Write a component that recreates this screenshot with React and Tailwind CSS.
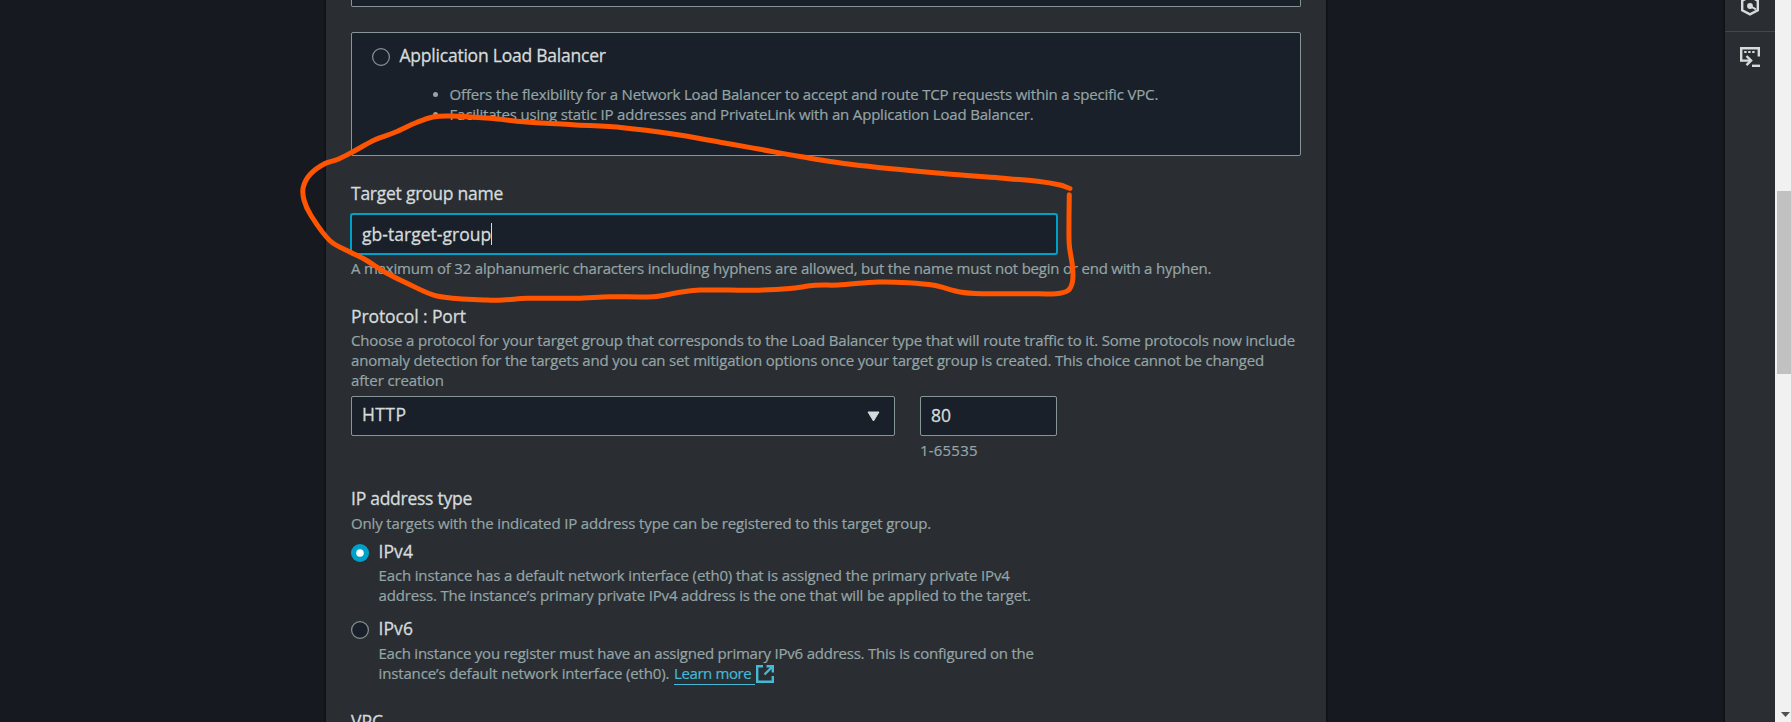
const MARK = [
  [1070, 188.5], [1060, 185], [1037.5, 181.3], [1000, 178], [945, 173.8], [852, 164.5], [800, 156.5], [760, 149.3], [723, 142.7], [673, 134],
  [623, 127.7], [573, 124.7], [523, 121.7], [490, 118.3], [450, 116], [433, 117], [417, 122.3], [395, 132.3],
  [375, 139.7], [353, 151.7], [338, 159.3], [325, 163.5], [310.5, 174], [303.3, 187], [304, 200], [310.7, 215],
  [330, 240.7], [350, 252], [365, 259.5], [387, 273.3], [407, 283.3], [438, 296.3], [487, 300], [503, 300],
  [527, 298.3], [577, 298.3], [610, 296.7], [653, 296.7], [680, 292.3], [700, 290], [753, 290.3], [790, 288.5],
  [815, 285.3], [838, 285], [878, 282], [908, 282.7], [934, 285.3], [960, 292], [982, 293.7], [1030, 293.7], [1056, 293.7],
  [1068, 290.5], [1072.5, 281.5], [1072.5, 266.7], [1069.3, 245], [1069, 220], [1069.3, 194.7],
];

function smooth(pts) {
  let d = `M${pts[0][0]} ${pts[0][1]}`;
  for (let i = 0; i < pts.length - 1; i++) {
    const a = pts[Math.max(0, i - 1)];
    const b = pts[i];
    const c = pts[i + 1];
    const e = pts[Math.min(pts.length - 1, i + 2)];
    const len = Math.hypot(c[0] - b[0], c[1] - b[1]);
    const t1 = len / (Math.hypot(c[0] - a[0], c[1] - a[1]) * 3);
    const t2 = len / (Math.hypot(e[0] - b[0], e[1] - b[1]) * 3);
    d += ` C${b[0] + (c[0] - a[0]) * t1} ${b[1] + (c[1] - a[1]) * t1} ${c[0] - (e[0] - b[0]) * t2} ${c[1] - (e[1] - b[1]) * t2} ${c[0]} ${c[1]}`;
  }
  return d;
}

function Label({ className = '', children }) {
  return <div className={`h-[22px] whitespace-nowrap text-[17.5px] leading-[22px] text-[#d5dbdb] [-webkit-text-stroke:0.3px_currentColor] ${className}`}>{children}</div>;
}

function Hint({ className = '', children }) {
  return <div className={`h-5 whitespace-nowrap text-[15px] leading-5 text-[#95a5a6] [-webkit-text-stroke:0.2px_currentColor] ${className}`}>{children}</div>;
}

function Radio({ checked }) {
  return (
    <svg className="size-[18px] shrink-0" viewBox="0 0 18 18">
      {checked ? (
        <>
          <circle cx="9" cy="9" r="9" fill="#00a1c9" />
          <circle cx="9" cy="9" r="3.8" fill="#fff" />
        </>
      ) : (
        <circle cx="9" cy="9" r="8.4" fill="#1a2029" stroke="#879596" strokeWidth="1.2" />
      )}
    </svg>
  );
}

function Form() {
  return (
    <main className="flex h-[722px] w-[1000px] flex-col overflow-hidden bg-[#2a2e33] px-[25px] shadow-[0_0_2px_1px_rgba(0,0,0,0.45)]">
      <div className="h-[7px] shrink-0 rounded-b-[2px] border border-t-0 border-[#879596] bg-[#1a2029]" />

      <section className="mt-[25px] h-[124px] shrink-0 rounded-[2px] border border-[#879596] bg-[#1a2029] pt-[11px] pl-5">
        <div className="flex gap-[9.5px]">
          <div className="pt-1">
            <Radio />
          </div>
          <Label className="tracking-[-0.22px]">Application Load Balancer</Label>
        </div>
        <ul className="mt-[18px] pl-[61px]">
          <li className="flex items-center gap-[11.5px]">
            <span className="size-[5px] rounded-full bg-[#95a5a6]" />
            <Hint className="tracking-[-0.16px]">
              Offers the flexibility for a Network Load Balancer to accept and route TCP requests within a specific VPC.
            </Hint>
          </li>
          <li className="flex items-center gap-[11.5px]">
            <span className="size-[5px] rounded-full bg-[#95a5a6]" />
            <Hint className="tracking-[-0.183px]">
              Facilitates using static IP addresses and PrivateLink with an Application Load Balancer.
            </Hint>
          </li>
        </ul>
      </section>

      <section className="mt-[26px]">
        <Label className="tracking-[-0.25px]">Target group name</Label>
        <div className="mt-[9px] -ml-px flex h-[42px] w-[708px] items-center rounded-[3px] border-2 border-[#00a1c9] bg-[#1a2029] pl-[10px]">
          <Label className="-mt-px tracking-[0.03px]">gb-target-group</Label>
          <span className="h-[22px] w-px bg-[#d5dbdb]" />
        </div>
        <Hint className="mt-[3px] tracking-[-0.208px]">
          A maximum of 32 alphanumeric characters including hyphens are allowed, but the name must not begin or end with a hyphen.
        </Hint>
      </section>

      <section className="mt-[27px]">
        <Label className="tracking-[-0.096px]">Protocol : Port</Label>
        <Hint className="mt-[3px] tracking-[-0.166px]">
          Choose a protocol for your target group that corresponds to the Load Balancer type that will route traffic to it. Some protocols now include
        </Hint>
        <Hint className="tracking-[-0.181px]">
          anomaly detection for the targets and you can set mitigation options once your target group is created. This choice cannot be changed
        </Hint>
        <Hint className="tracking-[-0.13px]">after creation</Hint>
        <div className="mt-[6px] flex gap-[25px]">
          <div className="flex h-10 w-[544px] items-start justify-between rounded-[2px] border border-[#879596] bg-[#1a2029] pt-[6px] pr-[14px] pl-[10px]">
            <Label className="tracking-[0.4px]">HTTP</Label>
            <svg className="mt-2 h-[11px] w-[13px]" viewBox="0 0 13 11">
              <path d="M1 1h11L6.5 10z" fill="#d5dbdb" stroke="#d5dbdb" strokeWidth="1" strokeLinejoin="round" />
            </svg>
          </div>
          <div className="w-[137px]">
            <div className="h-10 rounded-[2px] border border-[#879596] bg-[#1a2029] pt-[7px] pl-[10px]">
              <Label>80</Label>
            </div>
            <Hint className="mt-1 tracking-[0.2px]">1-65535</Hint>
          </div>
        </div>
      </section>

      <section className="mt-[27px]">
        <Label className="tracking-[-0.256px]">IP address type</Label>
        <Hint className="mt-1 tracking-[-0.147px]">
          Only targets with the indicated IP address type can be registered to this target group.
        </Hint>
        <div className="mt-[7px] flex gap-[9.5px]">
          <div className="pt-1">
            <Radio checked />
          </div>
          <div>
            <Label className="tracking-[0.1px]">IPv4</Label>
            <Hint className="mt-[3px] tracking-[-0.145px]">
              Each instance has a default network interface (eth0) that is assigned the primary private IPv4
            </Hint>
            <Hint className="tracking-[-0.165px]">
              address. The instance’s primary private IPv4 address is the one that will be applied to the target.
            </Hint>
          </div>
        </div>
        <div className="mt-3 flex gap-[9.5px]">
          <div className="pt-1">
            <Radio />
          </div>
          <div>
            <Label className="tracking-[0.1px]">IPv6</Label>
            <Hint className="mt-1 tracking-[-0.225px]">
              Each instance you register must have an assigned primary IPv6 address. This is configured on the
            </Hint>
            <div className="flex">
              <Hint className="w-[295.5px] tracking-[-0.14px]">instance’s default network interface (eth0).</Hint>
              <a className="flex h-[22px] w-[81px] border-b border-[#44b9d6]">
                <Hint className="tracking-[-0.4px] text-[#44b9d6]!">Learn more</Hint>
              </a>
              <svg className="mt-[2px] ml-px size-[18px]" viewBox="0 0 18 18" fill="none" stroke="#44b9d6" strokeWidth="2.4">
                <path d="M7 1.2H1.2v15.6h15.6V11M10.5 1.2h6.3v6.3M16.5 1.5 8.5 9.5" />
              </svg>
            </div>
          </div>
        </div>
      </section>

      <Label className="mt-[25px] shrink-0">VPC</Label>
    </main>
  );
}

function Rail() {
  return (
    <aside className="flex h-full w-[50px] flex-col bg-[#2a2e33] shadow-[0_0_2px_1px_rgba(0,0,0,0.45)]">
      <div className="flex h-8 justify-center border-b border-[#414750]">
        <svg className="h-[16px] w-[20px]" viewBox="0 0 20 16" fill="none" stroke="#d5dbdb" strokeWidth="2.4">
          <path d="M10-3.6 17.8.8V10.2L10 14.4 2.2 10.2V.8z" />
          <circle cx="10" cy="6" r="2.9" fill="#d5dbdb" stroke="none" />
          <path d="m10 6 6 3.4" strokeWidth="2" />
        </svg>
      </div>
      <div className="flex justify-center pt-[15px]">
        <svg className="size-5" viewBox="0 0 20 20" fill="none" stroke="#d5dbdb" strokeWidth="2.4">
          <path d="M18.8 9.5V1.2H1.2V13.6H11" />
          <path d="m6.5 9 4.6 4.6-4.6 4.6" />
          <path d="M12 18.8h8" />
          <path d="M4.2 5h2.4M8.2 5h2.4M12.2 5h2.4" strokeWidth="2" />
        </svg>
      </div>
    </aside>
  );
}

function Scrollbar() {
  return (
    <div className="flex h-full w-4 flex-col items-end bg-[#f1f1f1] pt-[191px]">
      <div className="h-[183px] w-[14px] bg-[#c1c1c1]" />
      <svg className="mt-[338px] mr-px h-[5px] w-[9px]" viewBox="0 0 9 5">
        <path d="M0 0h9L4.5 5z" fill="#505050" />
      </svg>
    </div>
  );
}

export default function App() {
  return (
    <div className="relative flex h-[722px] w-[1791px] overflow-hidden bg-[#16191f] font-['Open_Sans','Noto_Sans',sans-serif]">
      <div className="flex min-w-0 flex-1 pl-[326px]">
        <Form />
      </div>
      <Rail />
      <Scrollbar />
      <svg className="pointer-events-none absolute inset-0 h-[722px] w-[1791px]" viewBox="0 0 1791 722" fill="none">
        <path d={smooth(MARK)} stroke="#ff5500" strokeWidth="5" strokeLinecap="round" strokeLinejoin="round" />
      </svg>
    </div>
  );
}
